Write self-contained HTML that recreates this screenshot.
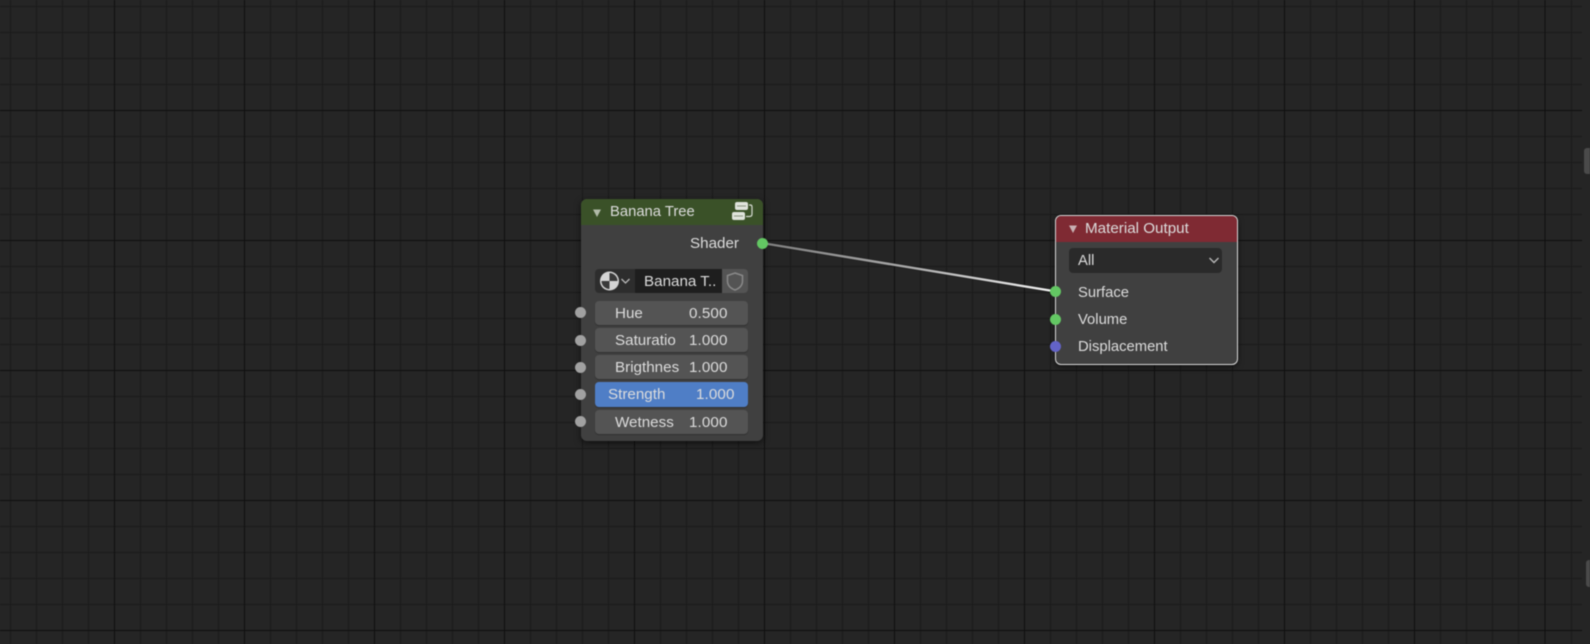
<!DOCTYPE html>
<html><head><meta charset="utf-8"><style>
html,body{margin:0;padding:0;background:#252525;}
#c{position:relative;width:1590px;height:644px;overflow:hidden;background:#252525;font-family:"Liberation Sans",sans-serif;color:#dcdcdc;font-size:14.8px;filter:blur(.45px);}
svg.bg{position:absolute;left:0;top:0;}
.a{position:absolute;}
.t{position:absolute;white-space:nowrap;line-height:18px;height:18px;}
.w{font-size:15.2px;}
.n{font-size:15.2px;letter-spacing:.1px;}
.node{position:absolute;background:#404040;border-radius:6px;box-sizing:border-box;}
.f{position:absolute;left:595px;width:153px;height:24px;background:#545454;border-radius:4px;box-shadow:0 1px 1px rgba(0,0,0,.25);}
.s{position:absolute;width:11px;height:11px;border-radius:50%;}
</style></head><body><div id="c">
<svg class="bg" width="1590" height="644" id="g">
<g stroke="#1a1a1a" stroke-width="1">
<path d="M10.5 0V644M36.5 0V644M62.5 0V644M88.5 0V644M140.5 0V644M166.5 0V644M192.5 0V644M218.5 0V644M270.5 0V644M296.5 0V644M322.5 0V644M348.5 0V644M400.5 0V644M426.5 0V644M452.5 0V644M478.5 0V644M530.5 0V644M556.5 0V644M582.5 0V644M608.5 0V644M660.5 0V644M686.5 0V644M712.5 0V644M738.5 0V644M790.5 0V644M816.5 0V644M842.5 0V644M868.5 0V644M920.5 0V644M946.5 0V644M972.5 0V644M998.5 0V644M1050.5 0V644M1076.5 0V644M1102.5 0V644M1128.5 0V644M1180.5 0V644M1206.5 0V644M1232.5 0V644M1258.5 0V644M1310.5 0V644M1336.5 0V644M1362.5 0V644M1388.5 0V644M1440.5 0V644M1466.5 0V644M1492.5 0V644M1518.5 0V644M1571.5 0V644"/>
<path d="M0 6.5H1582M0 32.5H1582M0 58.5H1582M0 84.5H1582M0 136.5H1582M0 162.5H1582M0 188.5H1582M0 214.5H1582M0 266.5H1582M0 292.5H1582M0 318.5H1582M0 344.5H1582M0 396.5H1582M0 422.5H1582M0 448.5H1582M0 474.5H1582M0 526.5H1582M0 552.5H1582M0 578.5H1582M0 604.5H1582"/>
</g>
<g stroke="#0f0f0f" stroke-width="1">
<path d="M114.5 0V644M244.5 0V644M374.5 0V644M504.5 0V644M634.5 0V644M764.5 0V644M894.5 0V644M1024.5 0V644M1154.5 0V644M1284.5 0V644M1414.5 0V644M1545 0V644"/>
<path d="M0 110.5H1582M0 240.5H1582M0 370.5H1582M0 500.5H1582M0 630.5H1582"/>
</g>
</svg>

<div class="a" style="left:1584px;top:148px;width:6px;height:26px;background:#4a4a4a;border-radius:3px 0 0 3px"></div>
<div class="a" style="left:1586px;top:560px;width:4px;height:27px;background:#4a4a4a;border-radius:3px 0 0 3px"></div>

<!-- Node 1 -->
<div class="node" style="left:581px;top:199px;width:182px;height:242px;box-shadow:0 2px 7px rgba(0,0,0,.6);overflow:hidden">
  <div class="a" style="left:0;top:0;width:182px;height:26px;background:#3a5128"></div>
</div>
<svg class="a" style="left:590px;top:206px" width="14" height="14"><path d="M3 3.500H11L7 11Z" fill="#b0baa8"/></svg>
<div class="t" style="left:610px;top:203px">Banana Tree</div>
<svg class="a" style="left:730px;top:200px" width="26" height="24" fill="none">
  <rect x="5" y="2" width="13" height="8" rx="2" fill="#dfe3dc"/>
  <rect x="2" y="12" width="13" height="8" rx="2" fill="#dfe3dc"/>
  <path d="M7 6H16M4 16H13" stroke="#8a9482" stroke-width="1"/>
  <path d="M19 5H20.500Q22 5 22 7V14Q22 16.500 19.500 16.500H16" stroke="#d5dad1" stroke-width="1.200"/>
</svg>
<div class="t w" style="right:851px;top:235px">Shader</div>
<div class="a" style="left:595px;top:269px;width:40px;height:24px;background:#2d2d2d;border-radius:4px 0 0 4px"></div>
<div class="a" style="left:635px;top:269px;width:87px;height:24px;background:#1e1e1e"></div>
<div class="a" style="left:722px;top:269px;width:26px;height:24px;background:#545454;border-radius:0 4px 4px 0"></div>
<svg class="a" style="left:598px;top:271px" width="36" height="21" fill="none">
  <circle cx="11.500" cy="10" r="9.500" fill="#d4d4d4"/>
  <path d="M11.500 2A8 8 0 0 1 19.500 10H11.500Z" fill="#3a3a3a"/>
  <path d="M11.500 18A8 8 0 0 1 3.500 10H11.500Z" fill="#3a3a3a"/>
  <path d="M23.500 8L27.500 12L31.500 8" stroke="#b8b8b8" stroke-width="1.300"/>
</svg>
<div class="t w" style="left:644px;top:273px">Banana T..</div>
<svg class="a" style="left:725px;top:271px" width="20" height="21" fill="none"><path d="M10 2L17.500 4.500V10C17.500 14.500 14 17.500 10 19C6 17.500 2.500 14.500 2.500 10V4.500Z" stroke="#8a8a8a" stroke-width="1.500"/></svg>

<div class="f" style="top:301px"></div>
<div class="t w" style="left:615px;top:305px">Hue</div><div class="t n" style="left:689px;top:305px">0.500</div>
<div class="f" style="top:328px"></div>
<div class="t w" style="left:615px;top:332px">Saturatio</div><div class="t n" style="left:689px;top:332px">1.000</div>
<div class="f" style="top:355px"></div>
<div class="t w" style="left:615px;top:359px">Brigthnes</div><div class="t n" style="left:689px;top:359px">1.000</div>
<div class="f" style="top:382px;height:25px;background:#4f7ec6"></div>
<div class="t w" style="left:608px;top:386px">Strength</div><div class="t n" style="left:696px;top:386px">1.000</div>
<div class="f" style="top:410px"></div>
<div class="t w" style="left:615px;top:414px">Wetness</div><div class="t n" style="left:689px;top:414px">1.000</div>

<div class="s" style="left:575px;top:307px;background:#a1a1a1"></div>
<div class="s" style="left:575px;top:334.500px;background:#a1a1a1"></div>
<div class="s" style="left:575px;top:361.500px;background:#a1a1a1"></div>
<div class="s" style="left:575px;top:388.500px;background:#a1a1a1"></div>
<div class="s" style="left:575px;top:416px;background:#a1a1a1"></div>

<!-- Node 2 -->
<div class="node" style="left:1055px;top:214.500px;width:183px;height:150.500px;border:1px solid #d8d8d8;box-shadow:0 2px 6px rgba(0,0,0,.5);overflow:hidden">
  <div class="a" style="left:0;top:0;width:181px;height:26px;background:#7f2a33"></div>
</div>
<svg class="a" style="left:1066px;top:222px" width="14" height="14"><path d="M3 3.500H11L7 11Z" fill="#c8b0b3"/></svg>
<div class="t w" style="left:1085px;top:220px">Material Output</div>
<div class="a" style="left:1069px;top:248px;width:153px;height:24.500px;background:#2a2a2a;border-radius:4px"></div>
<div class="t" style="left:1078px;top:252px">All</div>
<svg class="a" style="left:1207px;top:255px" width="14" height="12" fill="none"><path d="M2.500 3L7 7.500L11.500 3" stroke="#b8b8b8" stroke-width="1.400"/></svg>
<div class="t" style="left:1078px;top:284px">Surface</div>
<div class="t" style="left:1078px;top:311px">Volume</div>
<div class="t" style="left:1078px;top:338px">Displacement</div>

<svg class="a" style="left:0;top:0" width="1590" height="644">
<defs><linearGradient id="l" gradientUnits="userSpaceOnUse" x1="762" y1="243" x2="1056" y2="292"><stop offset="0" stop-color="#7e7e7e"/><stop offset=".5" stop-color="#aaaaaa"/><stop offset="1" stop-color="#f5f5f5"/></linearGradient></defs>
<path d="M762 243L1056 291.500" stroke="#161616" stroke-width="4" opacity=".4"/>
<path d="M762 243L1056 291.500" stroke="url(#l)" stroke-width="2.400"/>
</svg>
<div class="s" style="left:757px;top:238px;background:#63c763"></div>
<div class="s" style="left:1050px;top:286px;background:#63c763"></div>
<div class="s" style="left:1050px;top:313.500px;background:#63c763"></div>
<div class="s" style="left:1050px;top:341px;background:#6363c7"></div>
</div></body></html>
